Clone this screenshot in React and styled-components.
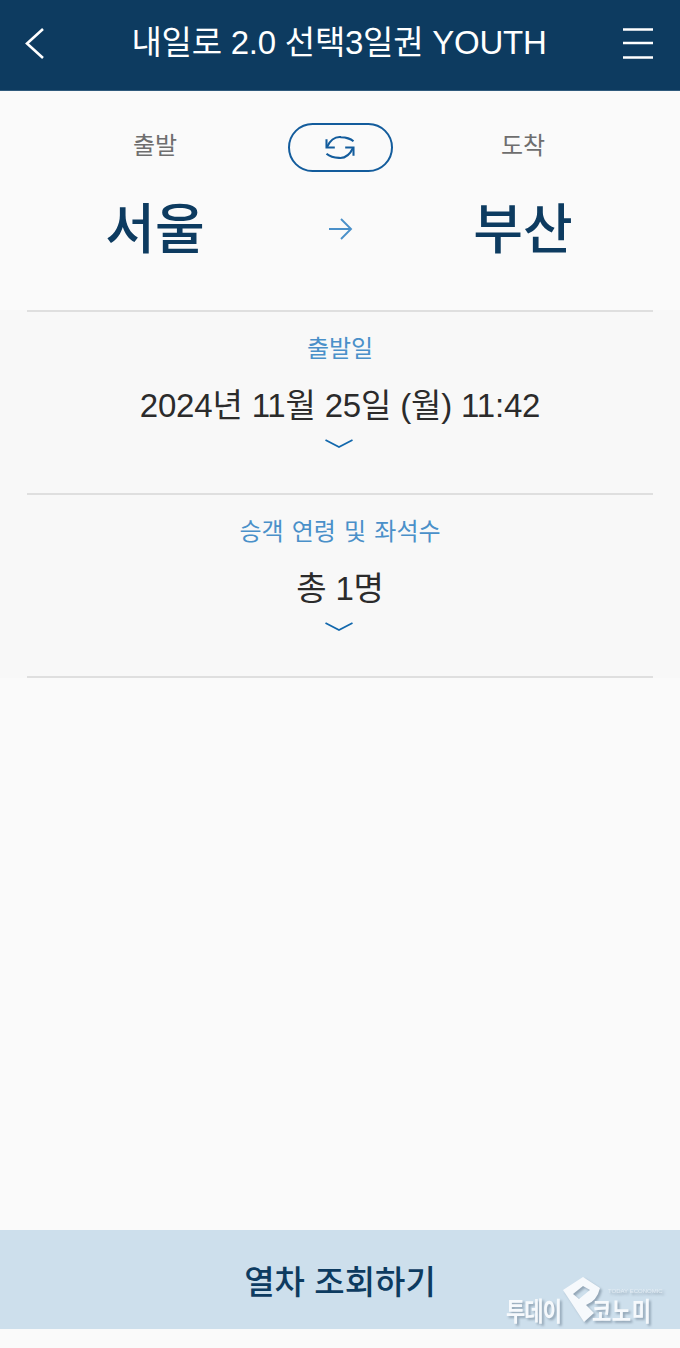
import React from "react";
import styled, { createGlobalStyle } from "styled-components";

const Global = createGlobalStyle`
  html, body { margin: 0; padding: 0; background: #fafafa; }
  body { font-family: "Liberation Sans", "Noto Sans CJK KR", sans-serif; }
  * { box-sizing: border-box; }
`;
const Page = styled.div`
  position: relative; width: 680px; height: 1348px; display: flex; flex-direction: column; background: #fafafa; overflow: hidden;
`;
const Header = styled.header`
  flex: none; height: 91px; background: #0d3b60; border-bottom: 1px solid #2f5a7c;
  display: flex; align-items: center; justify-content: space-between; padding: 0 26px 5px 24px; color: #fff;
`;
const IconSlot = styled.div`display: flex; width: 32px; height: 40px; align-items: center;`;
const Title = styled.h1`
  margin: 0; font-size: 33px; font-weight: 400; letter-spacing: -0.25px; line-height: 44px; white-space: nowrap;
`;
const Route = styled.section`
  flex: none; height: 219px; display: grid; grid-template-columns: 256px 114px 252px; grid-template-rows: 48px 70px;
  padding: 32px 31px 0 27px; justify-items: center; align-items: center; align-content: start; row-gap: 23px;
`;
const StationLabel = styled.div`font-size: 24px; color: #6e6e6e; line-height: 30px; margin-top: -2px;`;
const SwapButton = styled.button`
  width: 105px; height: 49px; border: 2px solid #135c9c; border-radius: 25px; background: transparent; padding: 0;
  display: flex; align-items: center; justify-content: center;
`;
const Station = styled.div`font-family: "Noto Sans CJK KR", sans-serif; font-size: 54px; font-weight: 500; color: #0d3b60; line-height: 70px; margin-top: -6px;`;
const ArrowSlot = styled.div`display: flex; justify-content: center;`;
const Panel = styled.div`flex: none; background: #f8f8f8; padding: 0 27px;`;
const Field = styled.div`
  height: 183px; border-top: 2px solid #dfdfdf; display: flex; flex-direction: column; align-items: center; padding-top: 21px;
`;
const LastRule = styled.div`height: 2px; background: #dfdfdf;`;
const FieldLabel = styled.div`font-size: 24px; color: #4a90c9; line-height: 32px; white-space: nowrap; word-spacing: 1.5px;`;
const FieldValue = styled.div`font-size: 33px; color: #2b2b2b; line-height: 44px; margin-top: 19px; letter-spacing: -0.18px; white-space: nowrap;`;
const Chevron = styled.svg`display: block; margin: 10px 2px 0 0;`;
const Spacer = styled.div`flex: 1;`;
const Search = styled.button`
  flex: none; height: 99px; width: 100%; border: 0; background: #cddfec; color: #0d3b60; font: inherit;
  font-family: "Noto Sans CJK KR", sans-serif; font-size: 33px; font-weight: 500; word-spacing: 2px; padding: 0;
`;
const Foot = styled.div`flex: none; height: 19px;`;
const Watermark = styled.div`
  position: absolute; left: 505px; top: 1275px; width: 152px; height: 50px; color: #f6f9fc;
  filter: drop-shadow(2px 2px 1px rgba(90,110,130,.5));
`;
const WmWord = styled.span`
  position: absolute; top: 24px; left: ${p => p.$left}px; font-family: "Noto Sans CJK KR", sans-serif; font-size: 21px; font-weight: 700; line-height: 22px;
  letter-spacing: ${p => p.$track}px; white-space: nowrap; transform: scaleY(1.25); transform-origin: left center;
`;
const WmEn = styled.span`
  position: absolute; left: 103px; top: 14px; font-size: 6px; line-height: 5px; color: #e4edf4; white-space: nowrap;
`;
const WmLogo = styled.svg`position: absolute; left: 57px; top: 2px;`;

const Chev = () => (
  <Chevron width="30" height="12" viewBox="0 0 30 12" fill="none">
    <path d="M1.5 2 L15 9 L28.5 2" stroke="#1268ad" strokeWidth="1.8" />
  </Chevron>
);

export default function App() {
  return (
    <Page>
      <Global />
      <Header>
        <IconSlot>
          <svg width="24" height="38" viewBox="0 0 24 38" fill="none"><path d="M19 5 L3 19.5 L19 34" stroke="#fff" strokeWidth="2.6" /></svg>
        </IconSlot>
        <Title>내일로 2.0 선택3일권 YOUTH</Title>
        <IconSlot>
          <svg width="32" height="40" viewBox="0 0 32 40" fill="none"><path d="M1 6.5H31M1 20H31M1 34.5H31" stroke="#fff" strokeWidth="2.4" /></svg>
        </IconSlot>
      </Header>
      <Route>
        <StationLabel>출발</StationLabel>
        <SwapButton aria-label="swap">
          <svg width="34" height="27" viewBox="0 0 32 26" fill="none" stroke="#135c9c" strokeWidth="2">
            <path d="M3 5 V13 H11" /><path d="M3.5 12.5 C7 5 12 2.5 17 3 C22 3.2 26 4.5 29 7" />
            <path d="M29 21 V13 H21" /><path d="M28.5 13.5 C25 21 20 23.5 15 23 C10 22.8 6 21.5 3 19" />
          </svg>
        </SwapButton>
        <StationLabel>도착</StationLabel>
        <Station>서울</Station>
        <ArrowSlot>
          <svg width="26" height="24" viewBox="0 0 26 24" fill="none" stroke="#4a90c9" strokeWidth="1.9"><path d="M2 12H24M14 2 L24 12 L14 22" /></svg>
        </ArrowSlot>
        <Station>부산</Station>
      </Route>
      <Panel>
        <Field>
          <FieldLabel>출발일</FieldLabel>
          <FieldValue>2024년 11월 25일 (월) 11:42</FieldValue>
          <Chev />
        </Field>
        <Field>
          <FieldLabel>승객 연령 및 좌석수</FieldLabel>
          <FieldValue>총 1명</FieldValue>
          <Chev />
        </Field>
        <LastRule />
      </Panel>
      <Spacer />
      <Search>열차 조회하기</Search>
      <Foot />
      <Watermark>
        <WmWord $left={1} $track={-1}>투데이</WmWord>
        <WmWord $left={87} $track={0.5}>코노미</WmWord>
        <WmEn>TODAY ECONOMIC</WmEn>
        <WmLogo width="40" height="46" viewBox="0 0 40 46" aria-hidden="true">
          <path fillRule="evenodd" fill="#f6f9fc" d="M1 13 L21 0 L38 11 Q35 24 24 28 L32 36 L22 45 Z M11 17 L21 9 L28 13 L17 22 Z" />
        </WmLogo>
      </Watermark>
    </Page>
  );
}
